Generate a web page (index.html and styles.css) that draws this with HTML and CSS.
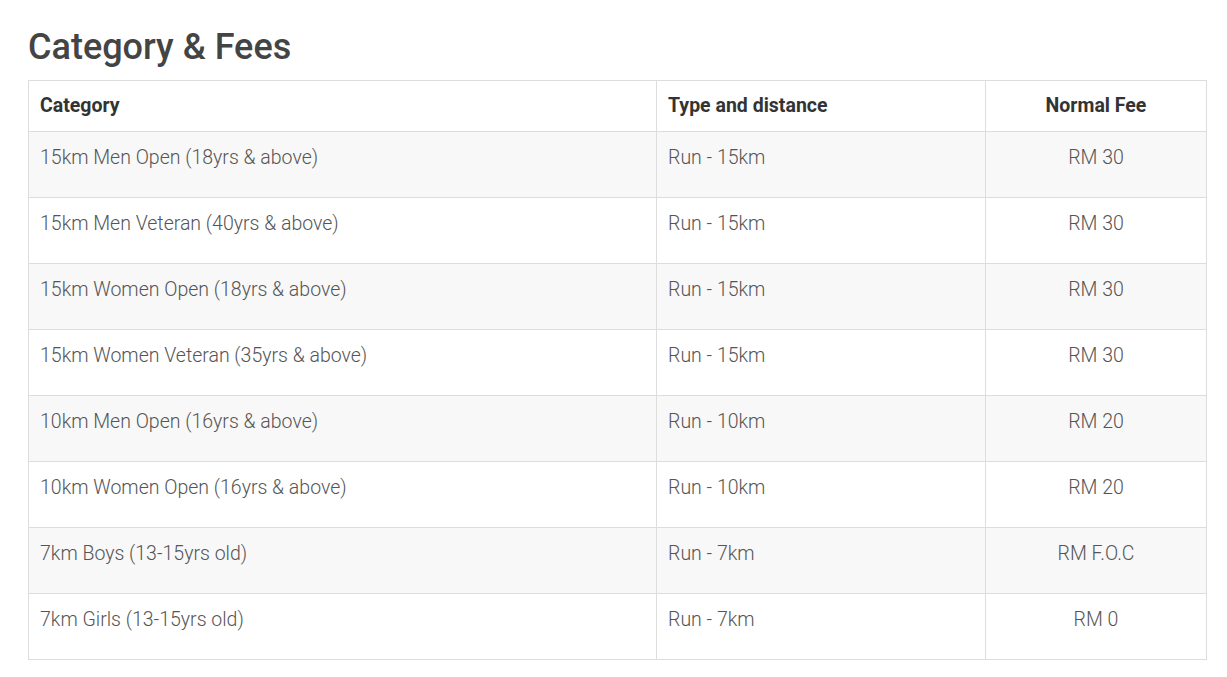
FILE: index.html
```html
<!DOCTYPE html>
<html>
<head>
<meta charset="utf-8">
<link rel="stylesheet" href="styles.css">
</head>
<body>
<div class="page">
  <h2 class="title">Category &amp; Fees</h2>
  <table class="fees">
    <colgroup>
      <col class="c1"><col class="c2"><col class="c3">
    </colgroup>
    <thead>
      <tr><th>Category</th><th>Type and distance</th><th class="center">Normal Fee</th></tr>
    </thead>
    <tbody>
      <tr><td>15km Men Open (18yrs &amp; above)</td><td>Run - 15km</td><td class="center">RM 30</td></tr>
      <tr><td>15km Men Veteran (40yrs &amp; above)</td><td>Run - 15km</td><td class="center">RM 30</td></tr>
      <tr><td>15km Women Open (18yrs &amp; above)</td><td>Run - 15km</td><td class="center">RM 30</td></tr>
      <tr><td>15km Women Veteran (35yrs &amp; above)</td><td>Run - 15km</td><td class="center">RM 30</td></tr>
      <tr><td>10km Men Open (16yrs &amp; above)</td><td>Run - 10km</td><td class="center">RM 20</td></tr>
      <tr><td>10km Women Open (16yrs &amp; above)</td><td>Run - 10km</td><td class="center">RM 20</td></tr>
      <tr><td>7km Boys (13-15yrs old)</td><td>Run - 7km</td><td class="center">RM F.O.C</td></tr>
      <tr><td>7km Girls (13-15yrs old)</td><td>Run - 7km</td><td class="center">RM 0</td></tr>
    </tbody>
  </table>
</div>
</body>
</html>
```

FILE: styles.css
```css
html, body {
  margin: 0;
  padding: 0;
  background: #fff;
}
.page {
  padding: 26px 20px 0 28px;
  font-family: Roboto, "Liberation Sans", sans-serif;
}
.title {
  margin: 0 0 12px 0;
  font-size: 36px;
  font-weight: 500;
  color: #444;
  line-height: 42px;
}
.fees {
  border-collapse: collapse;
  width: 1178px;
  table-layout: fixed;
  border: 1px solid #ddd;
  font-size: 19.5px;
}
.c1 { width: 628px; }
.c2 { width: 329px; }
.c3 { width: 221px; }
.fees th, .fees td {
  border: 1px solid #ddd;
  text-align: left;
  vertical-align: top;
  line-height: 26px;
}
.fees th {
  padding: 12px 11px 12px 11px;
  font-weight: 700;
  color: #333;
  background: #fff;
}
.fees td {
  padding: 13px 11px 26px 11px;
  color: #555;
  font-weight: 300;
}
.fees tbody tr:nth-child(odd) td {
  background: #f8f8f8;
}
.fees .center {
  text-align: center;
}
```
